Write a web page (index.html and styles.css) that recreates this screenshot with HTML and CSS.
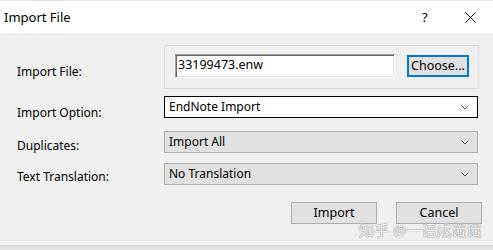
FILE: index.html
```html
<!DOCTYPE html>
<html>
<head>
<meta charset="utf-8">
<link rel="stylesheet" href="styles.css">
</head>
<body>
<div class="dialog">
  <div class="titlebar">
    <span class="title">Import File</span>
    <div class="title-btns">
      <span class="help">?</span>
      <svg class="close" width="11" height="11" viewBox="0 0 11 11"><path d="M0.5 0.5 L10.5 10.5 M10.5 0.5 L0.5 10.5" stroke="#111" stroke-width="1" fill="none"/></svg>
    </div>
  </div>
  <div class="content">
    <div class="row r1">
      <div class="label">Import File:</div>
      <div class="group">
        <div class="textbox">33199473.enw</div>
        <div class="btn choose">Choose...</div>
      </div>
    </div>
    <div class="row r2">
      <div class="label">Import Option:</div>
      <div class="select white"><span>EndNote Import</span><svg class="chev" width="8" height="5" viewBox="0 0 8 5"><path d="M0.5 0.5 L4 4 L7.5 0.5" stroke="#555" stroke-width="1" fill="none"/></svg></div>
    </div>
    <div class="row r3">
      <div class="label">Duplicates:</div>
      <div class="select grey"><span>Import All</span><svg class="chev" width="8" height="5" viewBox="0 0 8 5"><path d="M0.5 0.5 L4 4 L7.5 0.5" stroke="#555" stroke-width="1" fill="none"/></svg></div>
    </div>
    <div class="row r4">
      <div class="label">Text Translation:</div>
      <div class="select grey"><span>No Translation</span><svg class="chev" width="8" height="5" viewBox="0 0 8 5"><path d="M0.5 0.5 L4 4 L7.5 0.5" stroke="#555" stroke-width="1" fill="none"/></svg></div>
    </div>
    <div class="actions">
      <div class="btn action">Import</div>
      <div class="btn action">Cancel</div>
    </div>
    <div class="watermark">知乎 @一语成谶谶</div>
  </div>
  <div class="bottom"></div>
</div>
</body>
</html>
```

FILE: styles.css
```css
html, body {
  margin: 0;
  padding: 0;
  background: #f0f0f0;
}
body {
  width: 493px;
  height: 250px;
  overflow: hidden;
  font-family: "Noto Sans", "Noto Sans CJK SC", sans-serif;
  font-size: 12px;
  color: #000;
}
.dialog {
  display: flex;
  flex-direction: column;
  height: 250px;
}
.titlebar {
  height: 33px;
  background: #fff;
  border-top: 1px solid #e6e6e6;
  box-sizing: border-box;
  display: flex;
  align-items: center;
  justify-content: space-between;
  padding-left: 4px;
}
.title {
  font-size: 13px;
  line-height: 18px;
  margin-top: -1px;
}
.title-btns {
  display: flex;
  align-items: center;
}
.help {
  font-size: 13px;
  line-height: 16px;
  width: 8px;
  margin-right: 35px;
}
.close {
  margin-right: 17px;
  margin-top: 1px;
}
.content {
  position: relative;
  flex: 1;
  background: #f0f0f0;
  padding: 12px 0 0 17px;
}
.row {
  display: flex;
  align-items: flex-start;
  height: 22px;
}
.label {
  width: 147px;
  line-height: 16px;
  white-space: nowrap;
}
.r1 { height: 44px; }
.r1 .label { padding-top: 19px; }
.r2 { margin-top: 7px; }
.r2 .label { padding-top: 9px; }
.r3 { margin-top: 13px; }
.r3 .label { padding-top: 7px; }
.r4 { margin-top: 10px; }
.r4 .label { padding-top: 6px; }
.group {
  width: 315px;
  height: 44px;
  border: 1px solid #dcdcdc;
  box-sizing: border-box;
  display: flex;
  align-items: flex-start;
  padding: 8px 0 0 10px;
  gap: 12px;
}
.textbox {
  width: 220px;
  height: 24px;
  box-sizing: border-box;
  background: #fff;
  border-top: 1px solid #a0a0a0;
  border-left: 1px solid #a0a0a0;
  border-right: 1px solid #fff;
  border-bottom: 1px solid #fff;
  box-shadow: inset 1px 1px 0 #696969, inset -1px -1px 0 #e3e3e3;
  font-size: 12.5px;
  line-height: 20px;
  padding-left: 2px;
}
.btn {
  background: #e1e1e1;
  border: 1px solid #adadad;
  box-sizing: border-box;
  display: flex;
  align-items: center;
  justify-content: center;
  line-height: 16px;
}
.choose {
  width: 62px;
  height: 22px;
  margin-top: 1px;
  border: 2px solid #0078d7;
  font-size: 12.5px;
}
.select {
  width: 314px;
  height: 22px;
  box-sizing: border-box;
  display: flex;
  align-items: center;
  justify-content: space-between;
  padding: 0 8px 0 4px;
  line-height: 16px;
}
.select.white {
  background: #fff;
  border: 1px solid #000;
}
.select.grey {
  background: #e1e1e1;
  border: 1px solid #adadad;
}
.chev {
  display: block;
}
.actions {
  display: flex;
  justify-content: flex-end;
  gap: 19px;
  width: 465px;
  margin-top: 17px;
}
.action {
  width: 86px;
  height: 22px;
  font-size: 12.5px;
}
.watermark {
  position: absolute;
  left: 359px;
  top: 188px;
  font-size: 15px;
  line-height: 18px;
  color: rgba(255,255,255,0.9);
  text-shadow: 0 0 1px #8a8a8a, 0 0 1px #8a8a8a;
  white-space: nowrap;
}
.bottom {
  height: 5px;
  background: linear-gradient(#d6d6d6, #e8e8e8);
}
```
